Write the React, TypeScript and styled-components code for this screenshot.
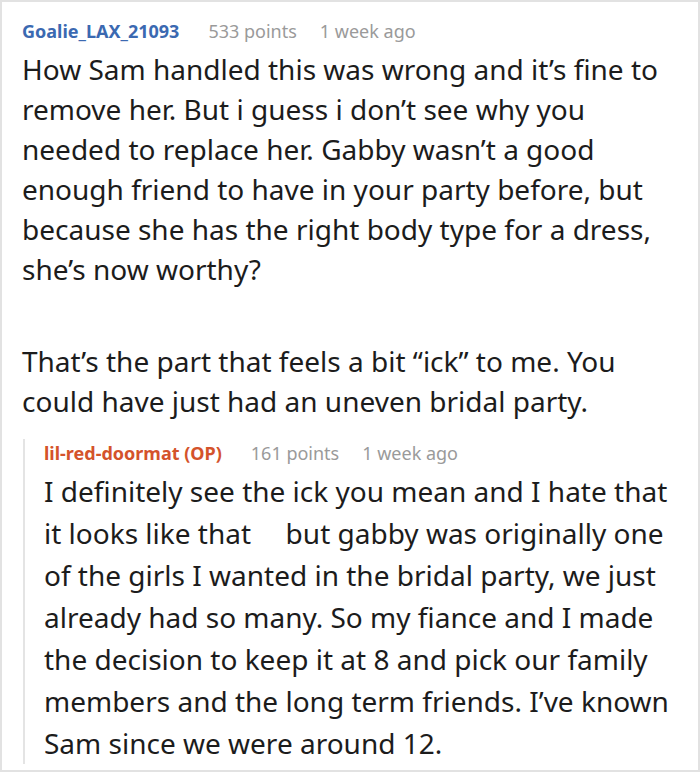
import React from 'react';
import styled, { createGlobalStyle } from 'styled-components';

const GlobalStyle = createGlobalStyle`
    html, body {
        margin: 0;
        padding: 0;
        background: #ffffff;
    }
    body {
        font-family: "Noto Sans", "Open Sans", sans-serif;
    }
`

const Frame = styled.div`
    width: 700px;
    height: 772px;
    box-sizing: border-box;
    border: 2px solid #e2e2e2;
    padding: 15px 20px 0 20px;
    overflow: hidden;
`

const Meta = styled.div<{ $bottom: number }>`
    display: flex;
    align-items: baseline;
    gap: 23px;
    font-size: 18px;
    line-height: 28px;
    margin-bottom: ${props => props.$bottom}px;
`

const Author = styled.span<{ $color: string }>`
    font-weight: 700;
    color: ${props => props.$color};
    margin-right: 6px;
`

const Info = styled.span`
    color: #9a9a9a;
`

const Body = styled.div<{ $lineHeight: number }>`
    font-size: 28px;
    line-height: ${props => props.$lineHeight}px;
    color: #1c1c1c;
`

const Paragraph = styled.p`
    margin: 0;
`

const Gap = styled.div<{ $size: number }>`
    height: ${props => props.$size}px;
`

const Reply = styled.div`
    margin-top: 18px;
    margin-left: 1px;
    border-left: 2px solid #e4e4e4;
    padding-left: 19px;
`

const EmojiSpace = styled.span`
    display: inline-block;
    width: 20px;
`

export default function App() {
    return <>
        <GlobalStyle />
        <Frame>
            <Meta $bottom={4}>
                <Author $color="#3b69b1">Goalie_LAX_21093</Author>
                <Info>533 points</Info>
                <Info>1 week ago</Info>
            </Meta>
            <Body $lineHeight={40}>
                <Paragraph>
                    How Sam handled this was wrong and it’s fine to<br />
                    remove her. But i guess i don’t see why you<br />
                    needed to replace her. Gabby wasn’t a good<br />
                    enough friend to have in your party before, but<br />
                    because she has the right body type for a dress,<br />
                    she’s now worthy?
                </Paragraph>
                <Gap $size={52} />
                <Paragraph>
                    That’s the part that feels a bit “ick” to me. You<br />
                    could have just had an uneven bridal party.
                </Paragraph>
            </Body>
            <Reply>
                <Meta $bottom={3}>
                    <Author $color="#d4532b">lil-red-doormat (OP)</Author>
                    <Info>161 points</Info>
                    <Info>1 week ago</Info>
                </Meta>
                <Body $lineHeight={42}>
                    <Paragraph>
                        I definitely see the ick you mean and I hate that<br />
                        it looks like that <EmojiSpace /> but gabby was originally one<br />
                        of the girls I wanted in the bridal party, we just<br />
                        already had so many. So my fiance and I made<br />
                        the decision to keep it at 8 and pick our family<br />
                        members and the long term friends. I’ve known<br />
                        Sam since we were around 12.
                    </Paragraph>
                </Body>
            </Reply>
        </Frame>
    </>
}
